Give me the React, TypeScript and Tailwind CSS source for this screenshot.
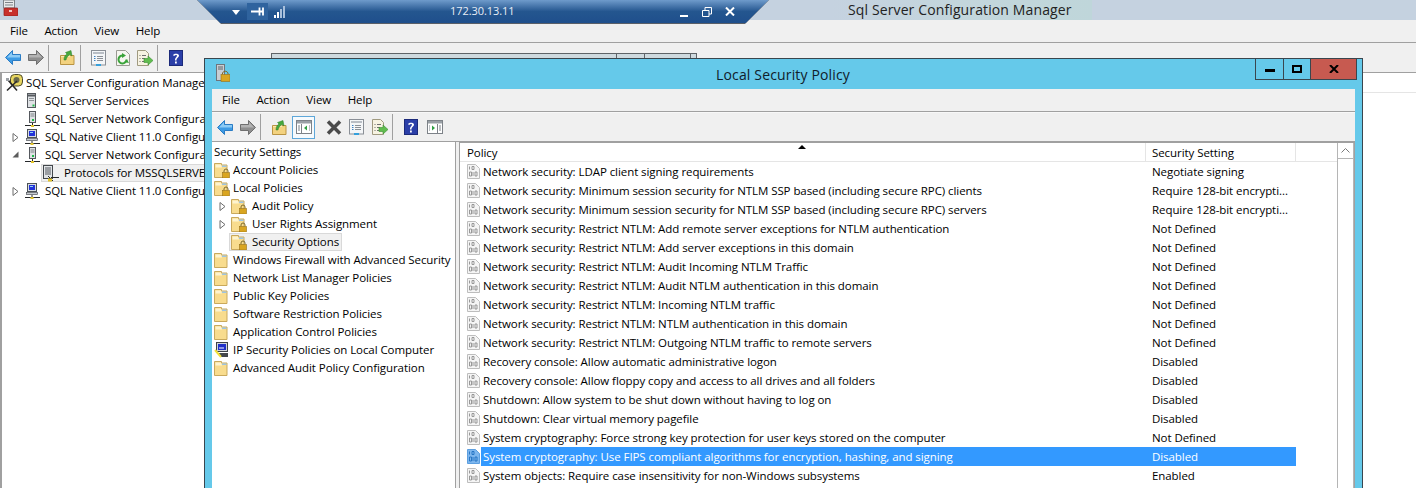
import React from "react";

const FONT = "font-['Open_Sans','Noto_Sans',sans-serif]";

const BackArrow = () => (
  <svg width="16" height="15" viewBox="0 0 16 15">
    <path d="M7.5.5 .5 7.500l7 7V10.500h8v-6h-8z" fill="#3d9be4" stroke="#2b7cc4" />
    <path d="M7 2 2 7.500h13V5H7z" fill="#8ccbf5" />
  </svg>
);

const ForwardArrow = () => (
  <svg width="16" height="15" viewBox="0 0 16 15">
    <path d="M8.500.5l7 7-7 7V10.500h-8v-6h8z" fill="#8f8f8f" stroke="#6f6f6f" />
    <path d="M9 2l5 5.500H1V5h8z" fill="#b4b4b4" />
  </svg>
);

const UpFolder = () => (
  <svg width="15" height="15" viewBox="0 0 15 15">
    <path d="M.5 5.500h13.500v9H.5z" fill="#f3d27f" stroke="#b99443" />
    <path d="M1 6h6l3-1v2H1z" fill="#fbe8ae" />
    <path d="M4 10c0-3 1-5 3-6L5.500 2.500 11 .5l1 5.500-2-1.500C8 5.500 6.500 7.500 6 10z" fill="#46a83c" stroke="#2f7f2b" strokeWidth=".5" />
  </svg>
);

const PropsIcon = () => (
  <svg width="16" height="16" viewBox="0 0 16 16">
    <rect x=".5" y=".5" width="14" height="14.500" fill="#f4f6f8" stroke="#8a8f96" />
    <rect x="2" y="2" width="11" height="2" fill="#b9bec5" />
    <rect x="3" y="6" width="1.500" height="1" fill="#3c82c4" />
    <rect x="6" y="6" width="6" height="1" fill="#8a8f96" />
    <rect x="3" y="8" width="1.500" height="1" fill="#3c82c4" />
    <rect x="6" y="8" width="6" height="1" fill="#8a8f96" />
    <rect x="3" y="10" width="1.500" height="1" fill="#3c82c4" />
    <rect x="6" y="10" width="6" height="1" fill="#8a8f96" />
    <rect x="5" y="14" width="5" height="2" fill="#35a0dc" />
  </svg>
);

const RefreshIcon = () => (
  <svg width="14" height="16" viewBox="0 0 14 16">
    <path d="M.5.5h9l4 4v11H.5z" fill="#f6f6f0" stroke="#9a9a92" />
    <path d="M10.500 9.500A4 4 0 1 1 7 5.500" fill="none" stroke="#3aa33a" strokeWidth="2" />
    <path d="M6 3l4 2.500L6 8z" fill="#3aa33a" />
    <path d="M8 12l3-2.500 2 3.500z" fill="#3aa33a" />
  </svg>
);

const ExportIcon = () => (
  <svg width="16" height="16" viewBox="0 0 16 16">
    <path d="M.5.5h8l3 3v12h-11z" fill="#f7f3e2" stroke="#a09a80" />
    <path d="M2.500 5h1v1h-1zM5 5h4v1H5zM2.500 8h1v1h-1zM5 8h3v1H5zM2.500 11h1v1h-1zM5 11h3v1H5z" fill="#6f6f6f" />
    <path d="M7 8.500h4V6l5 4.500-5 4.500v-2.500H7z" fill="#61bd4f" stroke="#3c8f34" strokeWidth=".6" />
  </svg>
);

const HelpIcon = () => (
  <svg width="14" height="16" viewBox="0 0 14 16">
    <rect x=".5" y=".5" width="13" height="15" fill="#2b3fa8" stroke="#1c2a7a" />
    <path d="M4 5.500C4 3 10 3 10 5.500 10 7.500 7.500 7.500 7.500 10.500H6C6 7.500 8 7 8 5.800 8 4.800 6 4.800 6 5.800z" fill="#fff" />
    <rect x="6" y="11.500" width="1.800" height="2" fill="#fff" />
  </svg>
);

const PaneIcon = ({ flip }: { flip?: boolean }) => (
  <svg width="16" height="14" viewBox="0 0 16 14">
    <rect x=".5" y=".5" width="15" height="13" fill="#fff" stroke="#7d8288" />
    <rect x="1" y="1" width="14" height="2.500" fill="#9aa0a6" />
    {flip ? (
      <>
        <path d="M5 5.500v5l3-2.500z" fill="#2f9e44" />
        <path d="M10.500 4v9" stroke="#7d8288" />
        <path d="M12 6h2M12 8h2M12 10h2M2 6h1M2 8h1M2 10h1" stroke="#7d8288" />
      </>
    ) : (
      <>
        <path d="M11 5.500v5l-3-2.500z" fill="#2f9e44" />
        <path d="M5.500 4v9" stroke="#7d8288" />
        <path d="M2 6h2M2 8h2M2 10h2M13 6h1M13 8h1M13 10h1" stroke="#7d8288" />
      </>
    )}
  </svg>
);

const DeleteIcon = () => (
  <svg width="16" height="15" viewBox="0 0 16 15">
    <path d="M2 1.500 14 13.500M14 1.500 2 13.500" stroke="#4a4a4a" strokeWidth="3.500" />
  </svg>
);

const Folder = ({ lock }: { lock?: boolean }) => (
  <svg width="16" height="16" viewBox="0 0 16 16" className="shrink-0">
    <path d="M.5 1.500h7v1.500h5.500v12.500H.5z" fill="#f8dc8e" stroke="#c9a95c" />
    <path d="M1.500 2.500h5.500l1 3H1.500z" fill="#fdf3cf" />
    <rect x="8" y="3.500" width="4.500" height="1.500" fill="#9cc4e4" />
    {lock && (
      <>
        <path d="M10 10.500V9a2 2 0 0 1 4 0v1.500" fill="none" stroke="#7d6a2a" />
        <rect x="8.500" y="10.500" width="7" height="5.500" fill="#d9a520" stroke="#96701a" strokeWidth=".6" />
      </>
    )}
  </svg>
);

const ServerLock = () => (
  <svg width="14" height="18" viewBox="0 0 14 18">
    <rect x=".5" y=".5" width="8" height="16" fill="#c9ced4" stroke="#6e757c" />
    <path d="M2 3h5M2 5h5" stroke="#5d646b" />
    <path d="M6.500 10.500V9a3 3 0 0 1 5.500 0v1.500" fill="none" stroke="#7c6a2c" />
    <rect x="5" y="10.500" width="9" height="7" fill="#d9a520" stroke="#96701a" strokeWidth=".6" />
  </svg>
);

const Server = () => (
  <svg width="12" height="16" viewBox="0 0 12 16">
    <rect x="1.500" y=".5" width="8" height="14" fill="#dfe2e5" stroke="#55595e" />
    <path d="M2 2.500h7" stroke="#55595e" strokeWidth="2" />
    <path d="M3 5.500h5M3 7.500h5" stroke="#8e9398" />
    <rect x="6.500" y="11.500" width="2" height="2" fill="#1fb84a" />
  </svg>
);

const NetServer = () => (
  <svg width="16" height="17" viewBox="0 0 16 17">
    <rect x="5.500" y=".5" width="6" height="11" fill="#dfe2e5" stroke="#55595e" />
    <path d="M6.500 3h4M6.500 5h4" stroke="#7e8388" />
    <rect x="8" y="8" width="2" height="2" fill="#1fb84a" />
    <path d="M8.500 12v3M1 14.500h15" stroke="#26282b" />
    <rect x="7" y="14" width="3" height="2" fill="#e3c42a" />
  </svg>
);

const NetClient = () => (
  <svg width="16" height="17" viewBox="0 0 16 17">
    <rect x="3.500" y=".5" width="9" height="8" fill="#d8dde2" stroke="#4d5257" />
    <rect x="5" y="2" width="6" height="5" fill="#2233d8" />
    <rect x="6" y="3" width="3" height="1" fill="#8fd4f4" />
    <rect x="2.500" y="9.500" width="11" height="2" fill="#c7cbd0" stroke="#4d5257" strokeWidth=".7" />
    <path d="M8 12v3M1 14.500h15" stroke="#26282b" />
    <rect x="6.500" y="14" width="3" height="2" fill="#e3c42a" />
  </svg>
);

const ProtocolIcon = () => (
  <svg width="17" height="17" viewBox="0 0 17 17">
    <rect x=".5" y=".5" width="9" height="13" fill="#e2e5e8" stroke="#41464b" />
    <path d="M2 3h6M2 5h6M2 7h6M2 9h6" stroke="#54595e" />
    <path d="M8 12.500h8M5 11l5 5" stroke="#26282b" />
    <rect x="5" y="13.500" width="4" height="3" fill="#e3c42a" />
  </svg>
);

const ManagerIcon = () => (
  <svg width="18" height="18" viewBox="0 0 18 18">
    <rect x="4.500" y=".5" width="12" height="11.500" rx="4" fill="#e7d560" stroke="#4d4a2c" />
    <circle cx="10.500" cy="6" r="3" fill="#6a6a4c" />
    <path d="M1 16.500 11 7M2 6l9 10.500" stroke="#2a2a2a" strokeWidth="1.600" />
    <path d="M0 4h3v3H0z" fill="#9b9fa4" />
  </svg>
);

const IpsecIcon = () => (
  <svg width="14" height="16" viewBox="0 0 14 16">
    <rect x="2.500" y=".5" width="11" height="9" fill="#cfd4d9" stroke="#3e4348" />
    <rect x="4" y="2" width="8" height="6" fill="#1f2fc8" />
    <path d="M5 6h5" stroke="#fff" />
    <path d="M3 11h11v4H7z" fill="#43474c" />
    <path d="M1 8l6 7" stroke="#f2e23a" strokeWidth="2" />
  </svg>
);

const ToolBox = () => (
  <svg width="15" height="16" viewBox="0 0 15 16">
    <rect x=".5" y="0" width="11" height="8" fill="#e8e9ea" stroke="#7d8288" />
    <path d="M2 2.500h8M2 5h8" stroke="#7d8288" />
    <rect x="1" y="8" width="14" height="8" rx="1" fill="#c8312c" stroke="#8e1d1a" strokeWidth=".7" />
    <rect x="6" y="10" width="3" height="2" fill="#f2c6c2" />
  </svg>
);

const PolicyIcon = ({ selected }: { selected?: boolean }) => {
  const line = selected ? "#1f6fc0" : "#8f8f8f";
  return (
    <svg width="13" height="15" viewBox="0 0 13 15">
      <path d="M.5.5h8l4 4v10H.5z" fill={selected ? "#7db6ee" : "#f5f5f5"} stroke={selected ? "#5c9fe0" : "#bdbdbd"} />
      <path d="M2.500 2.500v3M5 2.500h2v3H5zM2.500 8h2v4h-2zM6 8v4M8 8h2v4H8z" fill="none" stroke={line} strokeWidth=".9" />
    </svg>
  );
};

const Sep = () => <div className="w-px h-[26px] bg-[#a0a0a0] shrink-0" />;

const Menu = () => (
  <div className="h-[23px] pl-[10px] flex items-center gap-[16.500px] bg-[#f0f0f0] border-b border-[#a0a0a0] shrink-0 text-black">
    <span>File</span>
    <span>Action</span>
    <span>View</span>
    <span>Help</span>
  </div>
);

const backTree = [
  { label: "SQL Server Configuration Manager (Local)", icon: <ManagerIcon />, pad: "pl-[4px]", gap: "gap-[2px]" },
  { label: "SQL Server Services", icon: <Server />, pad: "pl-[24px]", gap: "gap-[7px]" },
  { label: "SQL Server Network Configuration (32bit)", icon: <NetServer />, pad: "pl-[22px]", gap: "gap-[5px]" },
  { label: "SQL Native Client 11.0 Configuration (32bit)", icon: <NetClient />, pad: "pl-[22px]", gap: "gap-[5px]", arrow: "closed" },
  { label: "SQL Server Network Configuration", icon: <NetServer />, pad: "pl-[22px]", gap: "gap-[5px]", arrow: "open" },
  { label: "Protocols for MSSQLSERVER", icon: <ProtocolIcon />, pad: "pl-[39px]", gap: "gap-[4px]", selected: true },
  { label: "SQL Native Client 11.0 Configuration", icon: <NetClient />, pad: "pl-[22px]", gap: "gap-[5px]", arrow: "closed" },
];

const frontTree = [
  { label: "Account Policies", lock: true },
  { label: "Local Policies", lock: true },
  { label: "Audit Policy", lock: true, depth: 1, arrow: true },
  { label: "User Rights Assignment", lock: true, depth: 1, arrow: true },
  { label: "Security Options", lock: true, depth: 1, selected: true },
  { label: "Windows Firewall with Advanced Security" },
  { label: "Network List Manager Policies" },
  { label: "Public Key Policies" },
  { label: "Software Restriction Policies" },
  { label: "Application Control Policies" },
  { label: "IP Security Policies on Local Computer", ipsec: true },
  { label: "Advanced Audit Policy Configuration" },
];

const policies = [
  ["Network security: LDAP client signing requirements", "Negotiate signing"],
  ["Network security: Minimum session security for NTLM SSP based (including secure RPC) clients", "Require 128-bit encrypti..."],
  ["Network security: Minimum session security for NTLM SSP based (including secure RPC) servers", "Require 128-bit encrypti..."],
  ["Network security: Restrict NTLM: Add remote server exceptions for NTLM authentication", "Not Defined"],
  ["Network security: Restrict NTLM: Add server exceptions in this domain", "Not Defined"],
  ["Network security: Restrict NTLM: Audit Incoming NTLM Traffic", "Not Defined"],
  ["Network security: Restrict NTLM: Audit NTLM authentication in this domain", "Not Defined"],
  ["Network security: Restrict NTLM: Incoming NTLM traffic", "Not Defined"],
  ["Network security: Restrict NTLM: NTLM authentication in this domain", "Not Defined"],
  ["Network security: Restrict NTLM: Outgoing NTLM traffic to remote servers", "Not Defined"],
  ["Recovery console: Allow automatic administrative logon", "Disabled"],
  ["Recovery console: Allow floppy copy and access to all drives and all folders", "Disabled"],
  ["Shutdown: Allow system to be shut down without having to log on", "Disabled"],
  ["Shutdown: Clear virtual memory pagefile", "Disabled"],
  ["System cryptography: Force strong key protection for user keys stored on the computer", "Not Defined"],
  ["System cryptography: Use FIPS compliant algorithms for encryption, hashing, and signing", "Disabled"],
  ["System objects: Require case insensitivity for non-Windows subsystems", "Enabled"],
];

const Closed = () => (
  <svg width="7" height="9" viewBox="0 0 7 9"><path d="M1 .5l5 4-5 4z" fill="#fff" stroke="#6d6d6d" /></svg>
);

const Open = () => (
  <svg width="7" height="7" viewBox="0 0 7 7"><path d="M6.500.5v6h-6z" fill="#5c5c5c" /></svg>
);

const RemoteBar = () => (
  <div className="absolute left-[197px] top-0 w-[572px] h-[24px] bg-[#5b6068] [clip-path:polygon(0_0,100%_0,calc(100%-24px)_100%,24px_100%)]">
    <div className="relative h-[23px] flex items-center pl-[35px] pr-[34px] text-white bg-gradient-to-b from-[#6f9bcb] via-[#24568f] to-[#1f4f8c] [clip-path:polygon(0_0,100%_0,calc(100%-23px)_100%,23px_100%)]">
      <div className="w-0 h-0 border-x-[4px] border-x-transparent border-t-[5px] border-t-white mt-[1px]" />
      <div className="ml-[7px] w-[21px] h-[17px] flex items-center justify-center bg-[#2f639e]">
        <svg width="13" height="9" viewBox="0 0 13 9"><path d="M0 4.500h12M8.500 .5v8M12 .5v8" stroke="#fff" strokeWidth="1.800" /></svg>
      </div>
      <svg width="11" height="12" viewBox="0 0 11 12" className="ml-[6px]">
        <path d="M0 9h2v3H0zM3 6h2v6H3z" fill="#fff" />
        <path d="M6 3h2v9H6zM9 0h2v12H9z" fill="#a9c0dc" />
      </svg>
      <span className="ml-[165px] text-[11px] text-[#e8eef6]">172.30.13.11</span>
      <div className="ml-auto w-[8px] h-[2px] bg-white mt-[9px]" />
      <svg width="10" height="10" viewBox="0 0 10 10" className="ml-[14px]">
        <path d="M3 3V.5h6.500V7H7M.5 3.500H7V9.500H.5z" fill="none" stroke="#fff" />
      </svg>
      <svg width="10" height="9" viewBox="0 0 10 9" className="ml-[13px]">
        <path d="M1 .5l8 8M9 .5 1 8.500" stroke="#fff" strokeWidth="2" />
      </svg>
    </div>
  </div>
);

const App = () => {
  return (
    <div className={`relative w-[1416px] h-[488px] overflow-hidden bg-white text-[11.500px] tracking-[-0.07px] text-black ${FONT}`}>
      {/* back window */}
      <div className="flex flex-col h-full">
        <div className="h-[20px] shrink-0 bg-[#c5d2e0] flex items-start">
          <div className="pl-[3px]"><ToolBox /></div>
          <div className="ml-[814px] w-[260px] h-[20px] pl-[16px] bg-gradient-to-r from-[#c5d2e0] via-[#c3d6dc] to-[#bfd6da] text-[14px] tracking-[0.12px] leading-[19px] text-[#222]">
            Sql Server Configuration Manager
          </div>
        </div>
        <Menu />
        <div className="h-[30px] shrink-0 bg-[#f0f0f0] border-b border-[#a0a0a0] flex items-center pl-[5px]">
          <BackArrow />
          <div className="ml-[7px]"><ForwardArrow /></div>
          <div className="ml-[4px]"><Sep /></div>
          <div className="ml-[11px]"><UpFolder /></div>
          <div className="ml-[5px]"><Sep /></div>
          <div className="ml-[10px]"><PropsIcon /></div>
          <div className="ml-[9px]"><RefreshIcon /></div>
          <div className="ml-[7px]"><ExportIcon /></div>
          <div className="ml-[4px]"><Sep /></div>
          <div className="ml-[11px]"><HelpIcon /></div>
        </div>
        <div className="flex-1 flex justify-between border-l-2 border-[#a0a0a0] min-h-0">
          {/* the rest of this tree is hidden behind the front window */}
          <div className="w-[203px] pt-[1px] whitespace-nowrap overflow-hidden">
            {backTree.map((row) => (
              <div key={row.label} className={`relative h-[18px] flex items-center ${row.pad}`}>
                {row.arrow && (
                  <div className="absolute left-[10px] top-[5px]">
                    {row.arrow === "open" ? <Open /> : <Closed />}
                  </div>
                )}
                <div className={`flex items-center h-[18px] ${row.gap} ${row.selected ? "bg-[#f0f0f0] border border-[#d9d9d9] pl-[1px] pr-[4px]" : ""}`}>
                  {row.icon}
                  <span>{row.label}</span>
                </div>
              </div>
            ))}
          </div>
          <div className="w-[54px] h-[20px] bg-white border-b border-[#e5e5e5]" />
        </div>
      </div>

      {/* hidden list header behind the front window */}
      <div className="absolute left-[271px] top-[53px] w-[426px] h-[5px] flex bg-[#cfdadf] border border-b-0 border-[#5f6468]">
        <div className="w-[345px] border-r border-[#5f6468]" />
        <div className="w-[28px] border-r border-[#5f6468]" />
        <div className="w-[46px] border-r border-[#5f6468]" />
      </div>

      <RemoteBar />

      {/* front window */}
      <div className="absolute left-[204px] top-[58px] w-[1159px] h-[480px] border border-[#3a464e] bg-[#65c9ea] flex flex-col px-[7px] pb-[7px]">
        <div className="relative h-[30px] shrink-0 flex items-center justify-center text-[14px] tracking-[0.15px] text-[#10202a]">
          <div className="absolute left-[4px] top-[5px]"><ServerLock /></div>
          <span className="ml-[-1px]">Local Security Policy</span>
          <div className="absolute right-[-2px] top-[-1px] flex h-[22px] border border-[#3a464e]">
            <div className="w-[28px] flex items-center justify-center border-r border-[#3a464e]">
              <div className="w-[10px] h-[3px] bg-black mt-[3px]" />
            </div>
            <div className="w-[26px] flex items-center justify-center">
              <div className="w-[10px] h-[8px] border-2 border-black" />
            </div>
            <div className="w-[46px] flex items-center justify-center bg-[#c75a50] border-l border-[#3a464e]">
              <svg width="10" height="8" viewBox="0 0 10 8"><path d="M1 0l8 8M9 0 1 8" stroke="#000" strokeWidth="2" /></svg>
            </div>
          </div>
        </div>
        <div className="flex-1 flex flex-col min-h-0 bg-[#f0f0f0]">
          <Menu />
          <div className="h-[30px] shrink-0 border-b border-[#a0a0a0] flex items-center pl-[5px] border-t border-t-[#f8f8f8]">
            <BackArrow />
            <div className="ml-[7px]"><ForwardArrow /></div>
            <div className="ml-[4px]"><Sep /></div>
            <div className="ml-[11px]"><UpFolder /></div>
            <div className="ml-[5px] w-[23px] h-[23px] flex items-center justify-center border border-[#5ea7d9] bg-[#f6fafd]"><PaneIcon /></div>
            <div className="ml-[11px]"><DeleteIcon /></div>
            <div className="ml-[7px]"><PropsIcon /></div>
            <div className="ml-[7px]"><ExportIcon /></div>
            <div className="ml-[4px]"><Sep /></div>
            <div className="ml-[11px]"><HelpIcon /></div>
            <div className="ml-[9px]"><PaneIcon flip /></div>
          </div>
          <div className="flex-1 flex gap-[3px] min-h-0">
            {/* scope tree */}
            <div className="w-[244px] bg-white border-r border-[#a0a0a0] pl-[2px] whitespace-nowrap overflow-hidden">
              <div className="h-[19px] pt-[1px] flex items-center">Security Settings</div>
              {frontTree.map((row) => (
                <div key={row.label} className={`relative h-[18px] flex items-center ${row.depth ? "pl-[17px]" : ""}`}>
                  {row.arrow && (
                    <div className="absolute left-[5px] top-[5px]"><Closed /></div>
                  )}
                  <div className={`flex items-center h-[18px] ${row.depth ? "gap-[5px]" : "gap-[3px]"} ${row.selected ? "bg-[#f0f0f0] border border-[#d9d9d9] -ml-[2px] pl-[1px] pr-[2px]" : ""}`}>
                    {row.ipsec ? <IpsecIcon /> : <Folder lock={row.lock} />}
                    <span className={row.ipsec ? "ml-[2px]" : ""}>{row.label}</span>
                  </div>
                </div>
              ))}
            </div>
            {/* result list */}
            <div className="flex-1 flex bg-white border border-b-0 border-[#a0a0a0] min-w-0">
              <div className="flex-1 min-w-0 whitespace-nowrap">
                <div className="relative h-[19px] flex border-b border-[#e5e5e5]">
                  <div className="w-[686px] border-r border-[#e5e5e5] pl-[7px] flex items-end leading-[17px]">Policy</div>
                  <div className="w-[150px] border-r border-[#e5e5e5] pl-[6px] flex items-end leading-[17px]">Security Setting</div>
                  <div className="absolute left-[338px] top-[2px] w-0 h-0 border-x-[4px] border-x-transparent border-b-[4px] border-b-black" />
                </div>
                {policies.map(([name, value]) => {
                  const selected = name.startsWith("System cryptography: Use");
                  return (
                    <div key={name} className="h-[19px] flex items-center pl-[7px]">
                      <PolicyIcon selected={selected} />
                      <div className={`ml-[1px] w-[815px] h-[19px] flex items-center ${selected ? "bg-[#3399ff] text-white" : ""}`}>
                        <div className="w-[671px] pl-[2px]">{name}</div>
                        <div>{value}</div>
                      </div>
                    </div>
                  );
                })}
              </div>
              <div className="w-[17px] shrink-0 border-l border-r border-[#b5b5b5] bg-white">
                <div className="h-[16px] flex items-center justify-center border-b border-[#b5b5b5]">
                  <svg width="9" height="5" viewBox="0 0 9 5"><path d="M.5 4.500 4.500.5l4 4" fill="none" stroke="#7a7a7a" /></svg>
                </div>
              </div>
            </div>
          </div>
        </div>
      </div>
    </div>
  );
};

export default App;
